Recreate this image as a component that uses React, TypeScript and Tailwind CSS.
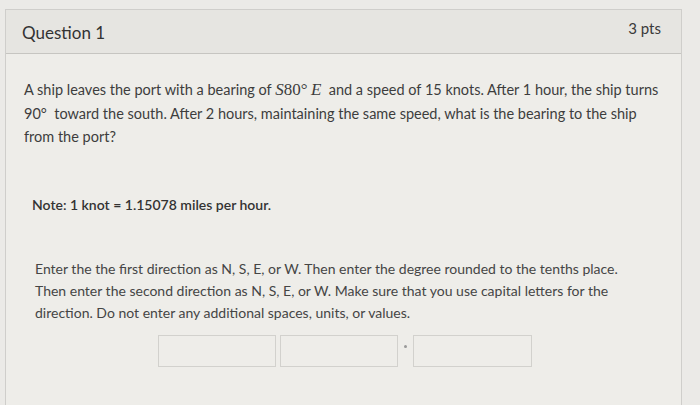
import React from "react";

export default function App() {
  const lato = { fontFamily: "Lato, 'Open Sans', sans-serif" };
  return (
    <div className="w-[700px] h-[405px] overflow-hidden bg-[#ebeae7] pt-[9px] pl-[5px]" style={lato}>
      <div className="w-[677px] h-[420px] border border-[#cfcecb] bg-[#eeede9]">
        <div className="h-[44px] bg-[#e6e5e1] border-b border-[#c6c5c1] flex items-center justify-between pl-[16px] pr-[20px]">
          <span className="text-[17px] text-[#333] pt-[2px]">Question 1</span>
          <span className="text-[15px] text-[#3a3a3a] -mt-[6px]">3 pts</span>
        </div>
        <div className="pl-[18px] pt-[24px] text-[14.5px] leading-[23.5px] text-[#3d3d3d] whitespace-nowrap">
          <p>
            A ship leaves the port with a bearing of{" "}
            <span className="text-[17px]" style={{ fontFamily: "'Liberation Serif', serif" }}>
              <i>S</i>80°&thinsp;<i>E</i>
            </span>
            &nbsp; and a speed of 15 knots. After 1 hour, the ship turns
            <br />
            90° &nbsp;toward the south. After 2 hours, maintaining the same speed, what is the bearing to the ship
            <br />
            from the port?
          </p>
          <p className="mt-[44px] pl-[8px] text-[#333] font-semibold text-[14px]">
            Note: 1 knot = 1.15078 miles per hour.
          </p>
          <p className="mt-[42px] pl-[11px] text-[14px] leading-[21.8px] text-[#454545]">
            Enter the the first direction as N, S, E, or W. Then enter the degree rounded to the tenths place.
            <br />
            Then enter the second direction as N, S, E, or W. Make sure that you use capital letters for the
            <br />
            direction. Do not enter any additional spaces, units, or values.
          </p>
          <div className="mt-[12px] pl-[134px] flex items-center">
            <div className="w-[118px] h-[32px] border border-[#d2d1cd] bg-[#eeede9]" />
            <div className="ml-[4px] w-[118px] h-[32px] border border-[#d2d1cd] bg-[#eeede9]" />
            <div className="mx-[6px] w-[3px] h-[3px] rounded-full bg-[#999] -mt-[10px]" />
            <div className="w-[119px] h-[32px] border border-[#d2d1cd] bg-[#eeede9]" />
          </div>
        </div>
      </div>
    </div>
  );
}
